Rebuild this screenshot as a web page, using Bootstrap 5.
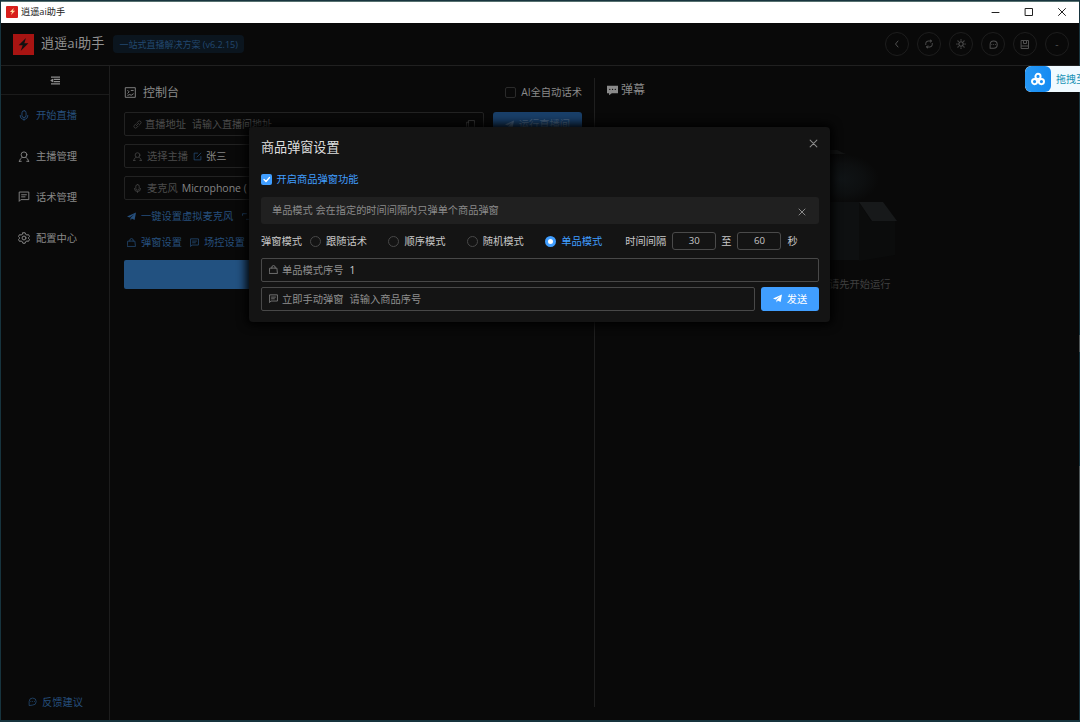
<!DOCTYPE html>
<html lang="zh-CN" data-bs-theme="dark">
<head>
<meta charset="utf-8">
<title>逍遥ai助手</title>
<link href="https://cdn.jsdelivr.net/npm/bootstrap@5.3.0/dist/css/bootstrap.min.css" rel="stylesheet">
<style>
body{font-family:"Open Sans","Noto Sans CJK SC",sans-serif;font-size:10.25px;line-height:1;background:#090909;color:#8c8c8c;width:1080px;height:722px;overflow:hidden;white-space:nowrap}
svg{fill:none;stroke:currentColor;stroke-width:1.3;stroke-linecap:round;stroke-linejoin:round;flex:none;width:11px;height:11px;overflow:visible}
.app{width:1080px;height:722px;border:solid #17343e;border-width:1px 1px 2px 1px}
.app-title{height:22px;background:#fff;color:#222;font-size:9.2px;padding:0 13px 2px 5px;border-top:1px solid #56706f}
.app-head{height:43px;border-bottom:1px solid #202020;padding:0 10px 0 12px}
.logo{background:#a81412;color:#111;width:21px;height:21px}
.logo-s{background:#d81f1c;color:#ffd9a0;width:12px;height:12px;border-radius:1px}
.brand{font-size:13.2px;color:#929292}
.ver{background:#0b151e;color:#22486f;font-size:9px;height:18px;padding:0 6px;border-radius:4px}
.round{width:24px;height:24px;border:1px solid #1d1d1d;border-radius:50%;color:#505050}
.side{width:109px;border-right:1px solid #1d1d1d}
.side-top{height:29px;border-bottom:1px solid #1b1b1b;color:#8d8d8d}
.side-item{height:40.8px;padding-left:17px;gap:6px;color:#8a8a8a}
.side-item.on,.lnk{color:#264f7c}
.console{width:484px;padding:15px 12px 0 14px}
.vline{width:1px;background:#1f1f1f;margin:12px 0 13px}
.field{border:1px solid #222;border-radius:2px;height:24px;padding:0 8px;color:#4c4c4c}
.field svg{width:9px;height:9px}
.head2{font-size:12px;color:#8a8a8a;height:24px}
.box{width:11px;height:11px;border:1px solid #2a2a2a;border-radius:2px}
.run{width:89px;height:24px;background:#193f69;color:#4b6785;border-radius:3px}
.big{height:29px;background:#225180;border-radius:2px}
.dlg{left:249px;top:127px;width:581px;height:195px;background:#141414;border-radius:4px;box-shadow:0 0 10px 3px #000;padding:10px 11px 0 12px;color:#c8c8c8}
.dlg-title{font-size:13.1px;height:21px;color:#dedede}
.tick{width:11px;height:11px;background:#409eff;border-radius:2px;color:#fff}
.tip{height:27px;background:#202020;border-radius:3px;color:#8a8a8a;padding:0 12px 0 11px;font-size:10.2px}
.rd{width:11px;height:11px;border:1px solid #484848;border-radius:50%;margin-right:5px}
.rd.on{border:3.5px solid #409eff;background:#fff}
.opt{width:78.4px}
.num{width:44px;height:18px;border:1px solid #4a4a4a;border-radius:3px;font-size:9.6px}
.fld{height:23.5px;border:1px solid #484848;border-radius:2px;color:#8f8f8f;padding:0 7px}
.send{width:58px;height:23.5px;background:#409eff;color:#fff;border-radius:3px}
.blue{color:#409eff}
.float{left:1025px;top:66px;width:55px;height:26px;background:#f0faff;border-radius:6px 0 0 6px;color:#1591b5;font-size:10px;overflow:hidden}
.float-ic{width:26px;height:26px;background:linear-gradient(90deg,#2798f5,#148bf2);border-radius:6px;color:#fff}
.empty{color:#404040;margin:11px 0 0 222px}
.edge{left:1079px;width:1px;background:#4c5557}
</style>
</head>
<body>
<svg class="d-none">
<symbol id="mic" viewBox="0 0 16 16"><rect x="5" y="1" width="6" height="10" rx="3"/><path d="M2.5 8a5.5 5.5 0 0 0 11 0M8 13.5V15"/></symbol>
<symbol id="user" viewBox="0 0 16 16"><circle cx="8" cy="5.5" r="4.2"/><path d="M1.5 15c.3-3.200 2-4.800 4-5.500M14.500 15c-.3-3.200-2-4.800-4-5.500M1 15h3M12 15h3"/></symbol>
<symbol id="chat" viewBox="0 0 16 16"><path d="M1 14.500V1.500h14v11H4zM4.500 5.500h7M4.500 8.500h5"/></symbol>
<symbol id="gear" viewBox="0 0 16 16"><path d="M6.500 1h3l.6 2 1.800 1 2-.5L15.400 6 14 7.500v1L15.400 10l-1.500 2.500-2-.5-1.800 1-.6 2h-3l-.6-2-1.800-1-2 .5L.6 10 2 8.500v-1L.6 6l1.500-2.500 2 .5 1.800-1z"/><circle cx="8" cy="8" r="2.600"/></symbol>
<symbol id="plane" viewBox="0 0 16 16"><path fill="currentColor" stroke="none" d="M0 8 16 1l-2.500 13-5-2.500L6.500 15l-.5-4.500L13 4 4.500 9.800z"/></symbol>
<symbol id="bag" viewBox="0 0 16 16"><path d="M2 5.500h12L15 15H1zM5 5.500V4a3 3 0 0 1 6 0v1.500"/></symbol>
<symbol id="x" viewBox="0 0 16 16"><path d="m2 2 12 12M14 2 2 14"/></symbol>
<symbol id="bolt" viewBox="0 0 16 16"><path fill="currentColor" stroke="none" d="M11 0 2 9h5L4.500 16 14 6.500H9z"/></symbol>
<symbol id="talk" viewBox="0 0 16 16"><path d="M2 14.500V8a6.300 6.300 0 1 1 6.300 6.500zM5 8h.1M8.200 8h.1M11.400 8h.1"/></symbol>
<symbol id="link" viewBox="0 0 16 16"><path d="m7 5 2.500-2.500a2.800 2.800 0 0 1 4 4L11 9M9 11l-2.500 2.500a2.800 2.800 0 0 1-4-4L5 7M6 10l4-4"/></symbol>
<symbol id="edit" viewBox="0 0 16 16"><path d="M8 2H2v12h12V8M7 9l7-7"/></symbol>
<symbol id="copy" viewBox="0 0 16 16"><path d="M5 1h10v12H5zM5 4H1v11h10v-2"/></symbol>
</svg>

<div class="app d-flex flex-column position-relative">
  <div class="app-title d-flex align-items-center">
    <span class="logo-s d-flex align-items-center justify-content-center" style="margin-right:3px"><svg style="width:7px;height:7px"><use href="#bolt"/></svg></span>
    <span>逍遥ai助手</span>
    <span class="ms-auto d-flex align-items-center" style="gap:25px">
      <svg viewBox="0 0 8 8" style="width:8px;height:8px;stroke-width:1"><path d="M0 4.500h7"/></svg>
      <svg viewBox="0 0 8 8" style="width:8px;height:8px;stroke-width:1"><path d="M.5.5h7v7h-7z"/></svg>
      <svg viewBox="0 0 8 8" style="width:8px;height:8px;stroke-width:1"><path d="m.5.5 7 7M7.500.5l-7 7"/></svg>
    </span>
  </div>
  <div class="app-head d-flex align-items-center">
    <span class="logo d-flex align-items-center justify-content-center"><svg style="width:13px;height:13px"><use href="#bolt"/></svg></span>
    <span class="brand" style="margin:0 9px 0 7px">逍遥ai助手</span>
    <span class="ver d-flex align-items-center">一站式直播解决方案 (v6.2.15)</span>
    <div class="ms-auto d-flex" style="gap:8px">
      <span class="round d-flex align-items-center justify-content-center"><svg viewBox="0 0 16 16" style="width:8px;height:8px;stroke-width:2"><path d="M10 2 5 8l5 6"/></svg></span>
      <span class="round d-flex align-items-center justify-content-center"><svg viewBox="0 0 16 16" style="width:8px;height:8px;stroke-width:2"><path d="M1.500 9V7a5 5 0 0 1 5-5H13M10.500 0 13 2l-2.500 2.500M14.500 7v2a5 5 0 0 1-5 5H3M5.500 11.500 3 14l2.500 2"/></svg></span>
      <span class="round d-flex align-items-center justify-content-center"><svg viewBox="0 0 16 16" style="width:10px;height:10px;stroke-width:1.700"><circle cx="8" cy="8" r="3.500"/><path d="M8 1v1M8 14v1M1 8h1M14 8h1M3 3l.7.7M12.300 12.300l.7.7M13 3l-.7.7M3.700 12.300 3 13"/></svg></span>
      <span class="round d-flex align-items-center justify-content-center"><svg style="width:9px;height:9px;stroke-width:1.800"><use href="#talk"/></svg></span>
      <span class="round d-flex align-items-center justify-content-center"><svg viewBox="0 0 16 16" style="width:8px;height:9px;stroke-width:2"><path d="M1 0h14v16H1zM5 0v6h6V0M1 11h14"/></svg></span>
      <span class="round d-flex align-items-center justify-content-center">-</span>
    </div>
  </div>

  <div class="d-flex flex-grow-1">
    <div class="side d-flex flex-column">
      <div class="side-top d-flex align-items-center justify-content-center"><svg viewBox="0 0 16 16" style="width:9px;height:9px;stroke-width:2;stroke-linecap:butt"><path d="M0 2h16M5 6h11M5 10h11M0 14h16M0 8l3-2v4z"/></svg></div>
      <div class="side-item on d-flex align-items-center"><svg style="width:12px"><use href="#mic"/></svg>开始直播</div>
      <div class="side-item d-flex align-items-center"><svg style="width:12px"><use href="#user"/></svg>主播管理</div>
      <div class="side-item d-flex align-items-center"><svg style="width:12px"><use href="#chat"/></svg>话术管理</div>
      <div class="side-item d-flex align-items-center"><svg style="width:12px;height:12px"><use href="#gear"/></svg>配置中心</div>
      <div class="mt-auto d-flex align-items-center lnk" style="padding:0 0 13px 27px;gap:5px"><svg style="width:9px;height:9px"><use href="#talk"/></svg>反馈建议</div>
    </div>

    <div class="console">
      <div class="head2 d-flex align-items-center">
        <svg viewBox="0 0 16 16" style="width:11px;height:11px;margin:-2px 0 0 1px"><path d="M1 1h14v14H1zM4 5l2 2-2 2M9 5h3M4 12l3-1 2 1 3-2"/></svg><span style="margin-left:7px">控制台</span>
        <span class="box ms-auto" style="margin-top:-2px"></span><span style="font-size:10.3px;margin:-2px 0 0 5px">AI全自动话术</span>
      </div>
      <div class="d-flex" style="margin:7px 0 8px;gap:9px">
        <div class="field d-flex align-items-center flex-grow-1"><svg><use href="#link"/></svg><span style="margin:0 6px 0 3px">直播地址</span><span style="font-size:10px">请输入直播间地址</span><svg class="ms-auto"><use href="#copy"/></svg></div>
        <div class="run d-flex align-items-center justify-content-center"><svg style="width:9px;height:9px;margin-right:5px"><use href="#plane"/></svg>运行直播间</div>
      </div>
      <div class="field d-flex align-items-center"><svg><use href="#user"/></svg><span style="margin:0 5px 0 5px">选择主播</span><svg class="lnk"><use href="#edit"/></svg><span style="margin-left:4px;color:#858585">张三</span></div>
      <div class="field d-flex align-items-center" style="margin-top:8px"><svg><use href="#mic"/></svg><span style="margin:0 4px 0 5px">麦克风</span><span style="color:#858585;font-size:10.5px">Microphone (</span></div>
      <div class="lnk d-flex align-items-center" style="height:28px;padding:4px 0 0 3px;gap:5px"><svg style="width:9px;height:9px"><use href="#plane"/></svg>一键设置虚拟麦克风<svg viewBox="0 0 16 16" style="width:9px;height:9px;margin-left:4px"><path d="M1 6V3h7M8 13h7v-3"/></svg></div>
      <div class="lnk d-flex align-items-center" style="height:26px;padding:3px 0 0 3px;gap:5px"><svg style="width:9px;height:9px"><use href="#bag"/></svg>弹窗设置<svg style="width:9px;height:9px;margin-left:3px"><use href="#chat"/></svg>场控设置</div>
      <div class="big" style="margin-top:6px"></div>
    </div>
    <div class="vline"></div>

    <div class="flex-grow-1" style="padding:12px 0 0 12px">
      <div class="head2 d-flex align-items-center"><svg viewBox="0 0 16 16" style="width:11px;height:11px"><path fill="currentColor" stroke="none" d="M0 1h16v11H7l-4 3v-3H0z"/><path stroke="#111" stroke-width="1.800" d="M4 6.500h.1M8 6.500h.1M12 6.500h.1"/></svg><span style="margin-left:3px">弹幕</span></div>
      <div style="margin:48px 0 0 182px;height:118px">
        <svg viewBox="0 0 100 118" style="width:100px;height:118px;stroke:none">
          <defs><radialGradient id="g"><stop offset="0" stop-color="#101416"/><stop offset=".6" stop-color="#0d0f10"/><stop offset="1" stop-color="#090909"/></radialGradient></defs>
          <path fill="#131414" d="M0 0h48l13 6H0z"/><rect x="14" y="4" width="76" height="50" fill="url(#g)"/>
          <path fill="#0e1011" d="M0 52h70v58H0z"/><path fill="#0b0c0c" d="M70 52l12 19h24v34l-36 6z"/>
          <path fill="#17191a" d="M70 52h24l14 19H83z"/>
        </svg>
      </div>
      <div class="empty">请先开始运行</div>
    </div>
  </div>
</div>

<div class="dlg position-absolute">
  <div class="dlg-title d-flex align-items-center">商品弹窗设置<svg class="ms-auto" style="width:9px;height:9px;color:#8b8b8b;stroke-width:1.800;margin:-9px 1px 0 0"><use href="#x"/></svg></div>
  <div class="d-flex align-items-center blue" style="height:22px;margin-top:10px"><span class="tick d-flex" style="margin-left:-.5px"><svg viewBox="0 0 11 11"><path d="m3 5.500 2 2L8.500 3.500"/></svg></span><span style="margin-left:5px">开启商品弹窗功能</span></div>
  <div class="tip d-flex align-items-center" style="margin-top:7px"><span>单品模式 会在指定的时间间隔内只弹单个商品弹窗</span><svg class="ms-auto" style="width:8px;height:8px;stroke-width:2;margin:2px 1px 0 0"><use href="#x"/></svg></div>
  <div class="d-flex align-items-center" style="height:18px;margin-top:8px">
    <span style="width:49px">弹窗模式</span>
    <span class="opt d-flex align-items-center"><i class="rd"></i>跟随话术</span>
    <span class="opt d-flex align-items-center"><i class="rd"></i>顺序模式</span>
    <span class="opt d-flex align-items-center"><i class="rd"></i>随机模式</span>
    <span class="opt d-flex align-items-center blue" style="width:80px"><i class="rd on"></i>单品模式</span>
    <span style="width:47px">时间间隔</span>
    <span class="num d-flex align-items-center justify-content-center">30</span><span style="margin:0 6px 0 5px">至</span><span class="num d-flex align-items-center justify-content-center">60</span><span style="margin-left:6px">秒</span>
  </div>
  <div class="fld d-flex align-items-center" style="margin-top:8px"><svg style="width:9px;height:9px"><use href="#bag"/></svg><span style="margin:0 6px 0 4px">单品模式序号</span><span style="color:#d0d0d0">1</span></div>
  <div class="d-flex" style="margin-top:5.5px;gap:6px">
    <div class="fld d-flex align-items-center flex-grow-1"><svg style="width:9px;height:9px"><use href="#chat"/></svg><span style="margin:0 6px 0 4px">立即手动弹窗</span><span>请输入商品序号</span></div>
    <div class="send d-flex align-items-center justify-content-center"><svg style="width:9px;height:9px;margin-right:5px"><use href="#plane"/></svg>发送</div>
  </div>
</div>

<div class="float position-absolute d-flex align-items-center">
  <span class="float-ic d-flex align-items-center justify-content-center flex-shrink-0"><svg viewBox="0 0 16 14" style="width:14px;height:12px;stroke-width:2.300"><circle cx="8" cy="4" r="3"/><circle cx="4" cy="10" r="3"/><circle cx="12" cy="10" r="3"/></svg></span><span style="margin-left:5px">拖拽至</span>
</div>
<div class="edge position-absolute" style="top:335px;height:17px"></div>
<div class="edge position-absolute" style="top:466px;height:114px"></div>
<script src="https://cdn.jsdelivr.net/npm/bootstrap@5.3.0/dist/js/bootstrap.bundle.min.js"></script>
</body>
</html>
